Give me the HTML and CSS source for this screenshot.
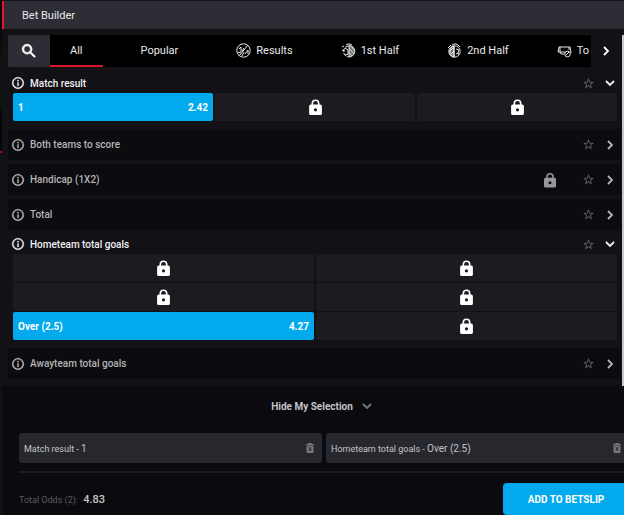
FILE: index.html
```
<!DOCTYPE html>
<html lang="en">
<head>
    <meta charset="UTF-8">
    <meta name="viewport" content="width=device-width, initial-scale=1.0">
    <title>Bet Builder</title>
    <link rel="stylesheet" href="styles.css">
</head>
<body>
    <!-- Shared icons -->
    <svg class="sprite" aria-hidden="true">
        <symbol id="info" viewBox="0 0 24 24"><path d="M11 7h2v2h-2zm0 4h2v6h-2zm1-9C6.500 2 2 6.500 2 12s4.500 10 10 10 10-4.500 10-10S17.500 2 12 2zm0 18c-4.400 0-8-3.600-8-8s3.600-8 8-8 8 3.600 8 8-3.600 8-8 8z" stroke="currentColor" stroke-width=".6"/></symbol>
        <symbol id="star" viewBox="0 0 24 24"><path d="M22 9.240l-7.190-.620L12 2 9.190 8.630 2 9.240l5.460 4.730L5.820 21 12 17.270 18.180 21l-1.630-7.030L22 9.240zM12 15.400l-3.760 2.270 1-4.280-3.320-2.880 4.380-.380L12 6.100l1.710 4.040 4.380.380-3.320 2.880 1 4.280L12 15.400z"/></symbol>
        <symbol id="lock" viewBox="0 0 16 20"><path fill-rule="evenodd" d="M14 7h-1V5.500a5 5 0 0 0-10 0V7H2a2 2 0 0 0-2 2v9a2 2 0 0 0 2 2h12a2 2 0 0 0 2-2V9a2 2 0 0 0-2-2zM5 7V5.500a3 3 0 0 1 6 0V7zm3 4.500a2 2 0 1 1 0 4 2 2 0 0 1 0-4z"/></symbol>
        <symbol id="right" viewBox="0 0 10 10"><path d="M3 1l4 4-4 4" fill="none" stroke="currentColor" stroke-width="1.800"/></symbol>
        <symbol id="down" viewBox="0 0 10 10"><path d="M1 3l4 4 4-4" fill="none" stroke="currentColor" stroke-width="1.800"/></symbol>
        <symbol id="trash" viewBox="0 0 16 20"><path fill-rule="evenodd" d="M0 2h4l1-2h6l1 2h4v2H0zM1 5h14v13a2 2 0 0 1-2 2H3a2 2 0 0 1-2-2zm4 4l2 3-2 3 1 1 2-2 2 2 1-1-2-3 2-3-1-1-2 2-2-2z"/></symbol>
    </svg>

    <div class="panel">
        <header>
            <h1>Bet Builder</h1>
        </header>

        <main>
            <nav>
                <button class="search" aria-label="Search">
                    <svg viewBox="0 0 24 24"><path d="M15.500 14h-.800l-.300-.300A6.500 6.500 0 1 0 13.700 14.400l.300.300v.800l5 5 1.500-1.500zm-6 0a4.500 4.500 0 1 1 0-9 4.500 4.500 0 0 1 0 9z"/></svg>
                </button>
                <div class="tabs">
                    <button class="tab plain active">All</button>
                    <button class="tab plain">Popular</button>
                    <button class="tab">
                        <svg viewBox="0 0 15 15" stroke="currentColor"><circle cx="7.500" cy="7.500" r="6.700"/><path d="M3 13L12 2M3 6l2-2v5M6 8l2-3M9 11l3-4v4M2 9l3 1M8 9l-2 4"/></svg>
                        Results
                    </button>
                    <button class="tab">
                        <svg viewBox="0 0 15 15" stroke="currentColor"><path d="M8 3a5.500 5.500 0 0 0 0 11" stroke-dasharray="4 1"/><path d="M5 2l2-1h2l2 1M1 4l2-1M1 7l3 1M4 5l3 2v4l-3 1"/><path d="M8 2.500a5.700 5.700 0 0 1 0 11.500z" fill="#777"/><path d="M8 5l5 6M8 9l3 4M10 3l3 4" stroke="#ccc"/></svg>
                        1st Half
                    </button>
                    <button class="tab">
                        <svg viewBox="0 0 15 15" stroke="currentColor"><path d="M7 3a5.700 5.700 0 0 0 0 11z" fill="#777"/><circle cx="7.500" cy="8.500" r="5.700"/><path d="M7 3v11M5 2l2-1h2l2 1M1 5l3-3M11 2l2 2"/><path d="M2 9l5-5M3 12l4-4M9 6l3 1-1 3-2 1M11 10l1 2"/></svg>
                        2nd Half
                    </button>
                    <button class="tab">
                        <svg viewBox="0 0 15 15" stroke="currentColor"><path d="M7 11H4l-1-2H1l1-5h11l1 6M3 4v5h5M12 4v3"/><circle cx="10.500" cy="11" r="2.800"/><path d="M9 12l3-3"/></svg>
                        To
                    </button>
                </div>
                <button class="next" aria-label="More tabs"><svg><use href="#right"/></svg></button>
            </nav>

            <div class="markets">
                <section class="market open">
                    <h2><svg class="info"><use href="#info"/></svg>Match result
                        <button class="fav" aria-label="Favourite"><svg><use href="#star"/></svg></button>
                        <button class="toggle" aria-label="Collapse"><svg><use href="#down"/></svg></button>
                    </h2>
                    <div class="odds three">
                        <button class="odd picked"><span>1</span><span>2.42</span></button>
                        <button class="odd" aria-label="Locked"><svg><use href="#lock"/></svg></button>
                        <button class="odd" aria-label="Locked"><svg><use href="#lock"/></svg></button>
                    </div>
                </section>
                <section class="market">
                    <h2><svg class="info"><use href="#info"/></svg>Both teams to score
                        <button class="fav" aria-label="Favourite"><svg><use href="#star"/></svg></button>
                        <button class="toggle" aria-label="Expand"><svg><use href="#right"/></svg></button>
                    </h2>
                </section>
                <section class="market">
                    <h2><svg class="info"><use href="#info"/></svg>Handicap (1X2)
                        <svg class="locked"><use href="#lock"/></svg>
                        <button class="fav" aria-label="Favourite"><svg><use href="#star"/></svg></button>
                        <button class="toggle" aria-label="Expand"><svg><use href="#right"/></svg></button>
                    </h2>
                </section>
                <section class="market">
                    <h2><svg class="info"><use href="#info"/></svg>Total
                        <button class="fav" aria-label="Favourite"><svg><use href="#star"/></svg></button>
                        <button class="toggle" aria-label="Expand"><svg><use href="#right"/></svg></button>
                    </h2>
                </section>
                <section class="market open">
                    <h2><svg class="info"><use href="#info"/></svg>Hometeam total goals
                        <button class="fav" aria-label="Favourite"><svg><use href="#star"/></svg></button>
                        <button class="toggle" aria-label="Collapse"><svg><use href="#down"/></svg></button>
                    </h2>
                    <div class="odds two">
                        <button class="odd" aria-label="Locked"><svg><use href="#lock"/></svg></button>
                        <button class="odd" aria-label="Locked"><svg><use href="#lock"/></svg></button>
                        <button class="odd" aria-label="Locked"><svg><use href="#lock"/></svg></button>
                        <button class="odd" aria-label="Locked"><svg><use href="#lock"/></svg></button>
                        <button class="odd picked"><span>Over (2.5)</span><span>4.27</span></button>
                        <button class="odd" aria-label="Locked"><svg><use href="#lock"/></svg></button>
                    </div>
                </section>
                <section class="market">
                    <h2><svg class="info"><use href="#info"/></svg>Awayteam total goals
                        <button class="fav" aria-label="Favourite"><svg><use href="#star"/></svg></button>
                        <button class="toggle" aria-label="Expand"><svg><use href="#right"/></svg></button>
                    </h2>
                </section>
            </div>
        </main>

        <footer>
            <button class="hide">Hide My Selection <svg><use href="#down"/></svg></button>
            <div class="selections">
                <div class="selection">
                    <span>Match result - <b>1</b></span>
                    <button aria-label="Remove"><svg><use href="#trash"/></svg></button>
                </div>
                <div class="selection">
                    <span>Hometeam total goals - <b>Over (2.5)</b></span>
                    <button aria-label="Remove"><svg><use href="#trash"/></svg></button>
                </div>
            </div>
            <div class="summary">
                <span class="total">Total Odds (2): <b>4.83</b></span>
                <button class="add">ADD TO BETSLIP</button>
            </div>
        </footer>
    </div>
</body>
</html>
```
FILE: styles.css
```
* {
    box-sizing: border-box;
}
body {
    font-family: Roboto, sans-serif;
    font-size: 11px;
    margin: 0;
    padding-left: 2px;
    background: linear-gradient(#08090a 35px, #0b140c 60px, #0b140c 110px, #050506 111px, #050506 151px, #a01020 151px, #a01020 153px, #121116 153px);
    color: #e8e8ea;
    overflow: hidden;
}
button {
    font: inherit;
    color: inherit;
    background: none;
    border: none;
    padding: 0;
    cursor: pointer;
}
svg {
    display: block;
    flex-shrink: 0;
    fill: currentColor;
}
.sprite {
    display: none;
}
.panel {
    height: 100vh;
    display: flex;
    flex-direction: column;
    background-color: #121116;
    overflow: hidden;
}
header {
    height: 28px;
    margin: 1px 0 6px;
    padding-left: 18px;
    display: flex;
    align-items: center;
    background-color: #2e2d36;
    border-left: 2px solid #e8142c;
}
h1 {
    margin: 0;
    font-size: 11px;
    font-weight: 400;
}
main {
    flex: 1;
    min-height: 0;
    padding: 0 1px 0 6px;
    border-right: 2px solid #c8c8ca;
    overflow: hidden;
}

/* Tabs */
nav {
    display: flex;
    height: 32px;
    margin-bottom: 6px;
}
.search {
    width: 42px;
    display: flex;
    align-items: center;
    justify-content: center;
    background-color: #2e2d36;
    border-radius: 2px 0 0 2px;
    color: #fff;
}
.search svg {
    width: 18px;
    height: 18px;
    stroke: #fff;
}
.tabs {
    flex: 1;
    min-width: 0;
    display: flex;
    background-color: #000;
    overflow: hidden;
}
.tab {
    flex-shrink: 0;
    display: flex;
    align-items: center;
    gap: 5px;
    padding: 0 20px;
    margin-right: 8px;
    border-bottom: 2px solid transparent;
}
.tab.plain {
    margin-right: 18px;
}
.tab.active {
    border-bottom-color: #d81528;
}
.tab svg {
    width: 15px;
    height: 15px;
    fill: none;
}
.next {
    width: 30px;
    display: flex;
    align-items: center;
    justify-content: center;
    color: #fff;
}
.next svg {
    width: 10px;
    height: 10px;
}

/* Markets */
.market {
    margin-bottom: 4px;
    background-color: #0c0b10;
    color: #b4b4b6;
}
.market.open {
    margin-bottom: 8px;
    background: none;
    color: #f0f0f2;
}
h2 {
    height: 31px;
    margin: 0;
    padding: 0 6px 0 3px;
    display: flex;
    align-items: center;
    font-size: 10px;
    font-weight: 500;
}
.open h2 {
    height: 20px;
}
.info {
    width: 14px;
    height: 14px;
    margin-right: 5px;
}
.locked {
    width: 12px;
    height: 16px;
    margin-left: auto;
    color: #98989a;
}
.fav {
    margin-left: auto;
    color: #626166;
}
.locked + .fav {
    margin-left: 26px;
}
.fav svg {
    width: 13px;
    height: 13px;
}
.toggle {
    margin-left: 10px;
}
.toggle svg {
    width: 10px;
    height: 10px;
}
.odds {
    display: grid;
    gap: 1px 2px;
    padding: 0 4px 0 5px;
}
.three {
    grid-template-columns: repeat(3, 1fr);
}
.two {
    grid-template-columns: repeat(2, 1fr);
}
.odd {
    height: 28px;
    padding: 0 5px;
    display: flex;
    align-items: center;
    justify-content: center;
    background-color: #1c1b1f;
    border-radius: 2px;
    font-size: 10px;
    color: #fff;
}
.odd.picked {
    justify-content: space-between;
    background-color: #02a9ec;
    font-weight: 700;
}
.odd svg {
    width: 13px;
    height: 16px;
}

/* My selection */
footer {
    flex-shrink: 0;
    padding-left: 17px;
    margin-right: -5px;
    background-color: #0b0a0f;
}
.hide {
    width: 100%;
    height: 47px;
    padding: 0 5px 7px 0;
    display: flex;
    align-items: center;
    justify-content: center;
    gap: 9px;
    font-size: 10px;
    font-weight: 700;
    color: #c4c4c6;
}
.hide svg {
    width: 10px;
    height: 10px;
    color: #77777a;
}
.selections {
    display: grid;
    grid-template-columns: repeat(2, 1fr);
    gap: 4px;
    padding-bottom: 8px;
    border-bottom: 2px solid #1c1b20;
}
.selection {
    height: 30px;
    padding: 0 8px 0 5px;
    display: flex;
    align-items: center;
    justify-content: space-between;
    background-color: #27272e;
    border-radius: 3px;
    font-size: 9px;
    color: #c4c4c6;
}
.selection b {
    font-size: 10px;
    font-weight: 400;
}
.selection svg {
    width: 8px;
    height: 10px;
    color: #77777a;
}
.summary {
    height: 42px;
    padding-top: 10px;
    display: flex;
    align-items: center;
    justify-content: space-between;
}
.total {
    font-size: 9px;
    color: #5c5c60;
}
.total b {
    margin-left: 3px;
    font-size: 11px;
    font-weight: 500;
    color: #c4c4c6;
}
.add {
    width: 126px;
    height: 32px;
    background-color: #02a9ec;
    border-radius: 4px;
    font-size: 10px;
    font-weight: 700;
    color: #fff;
}
```
